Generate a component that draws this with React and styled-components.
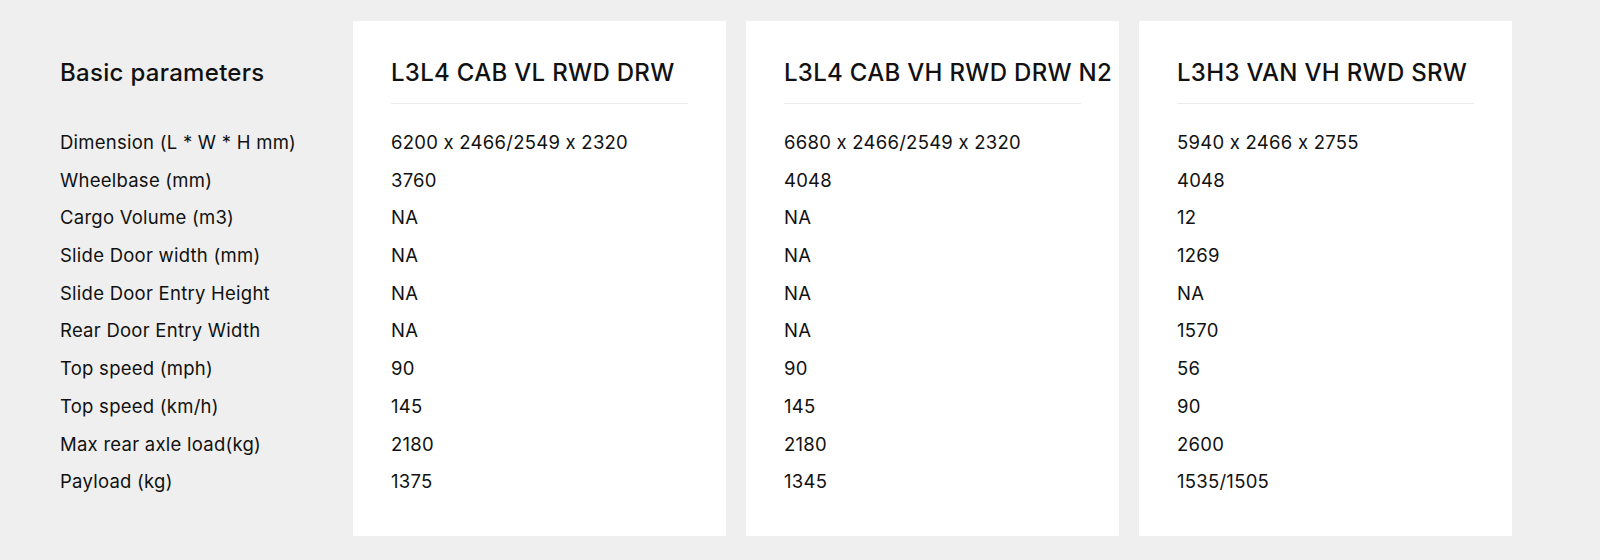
import React from "react";
import styled, { createGlobalStyle } from "styled-components";

const Global = createGlobalStyle`
  html, body {
    margin: 0;
    padding: 0;
    background: #efefef;
  }
  body {
    font-family: Inter, Lato, "Liberation Sans", sans-serif;
    font-feature-settings: "calt" 0;
    color: #111111;
    -webkit-font-smoothing: antialiased;
  }
`;

const Page = styled.div`
  width: 1600px;
  height: 560px;
  box-sizing: border-box;
  background: #efefef;
  padding: 21px 0 0 60px;
  display: flex;
  align-items: flex-start;
  overflow: hidden;
`;

const LabelColumn = styled.div`
  width: 293px;
  flex: none;
  box-sizing: border-box;
`;

const Cards = styled.div`
  display: flex;
  gap: 20px;
`;

const Card = styled.div`
  width: 373px;
  height: 515px;
  box-sizing: border-box;
  background: #ffffff;
  padding: 0 38px;
`;

const Header = styled.div`
  height: 83px;
  box-sizing: border-box;
  padding-top: 37px;
  border-bottom: 1px solid ${(p) => (p.$plain ? "transparent" : "#ebebeb")};
  margin-bottom: 26px;
`;

const Title = styled.h2`
  margin: 0;
  font-size: 24px;
  line-height: 30px;
  font-weight: 500;
  letter-spacing: 0.3px;
  white-space: nowrap;
  font-feature-settings: "calt" 0;
`;

const List = styled.ul`
  list-style: none;
  margin: 0;
  padding: 0;
`;

const Row = styled.li`
  height: 37.7px;
  font-size: 18.5px;
  line-height: 24px;
  letter-spacing: 0.25px;
  white-space: nowrap;
  font-feature-settings: "calt" 0;
`;

const labels = [
  "Dimension (L * W * H mm)",
  "Wheelbase (mm)",
  "Cargo Volume (m3)",
  "Slide Door width (mm)",
  "Slide Door Entry Height",
  "Rear Door Entry Width",
  "Top speed (mph)",
  "Top speed (km/h)",
  "Max rear axle load(kg)",
  "Payload (kg)",
];

const models = [
  {
    name: "L3L4 CAB VL RWD DRW",
    values: ["6200 x 2466/2549 x 2320", "3760", "NA", "NA", "NA", "NA", "90", "145", "2180", "1375"],
  },
  {
    name: "L3L4 CAB VH RWD DRW N2",
    values: ["6680 x 2466/2549 x 2320", "4048", "NA", "NA", "NA", "NA", "90", "145", "2180", "1345"],
  },
  {
    name: "L3H3 VAN VH RWD SRW",
    values: ["5940 x 2466 x 2755", "4048", "12", "1269", "NA", "1570", "56", "90", "2600", "1535/1505"],
  },
];

export default function App() {
  return (
    <>
      <Global />
      <Page>
        <LabelColumn>
          <Header $plain>
            <Title>Basic parameters</Title>
          </Header>
          <List>
            {labels.map((l) => (
              <Row key={l}>{l}</Row>
            ))}
          </List>
        </LabelColumn>
        <Cards>
          {models.map((m) => (
            <Card key={m.name}>
              <Header>
                <Title>{m.name}</Title>
              </Header>
              <List>
                {m.values.map((v, i) => (
                  <Row key={i}>{v}</Row>
                ))}
              </List>
            </Card>
          ))}
        </Cards>
      </Page>
    </>
  );
}
